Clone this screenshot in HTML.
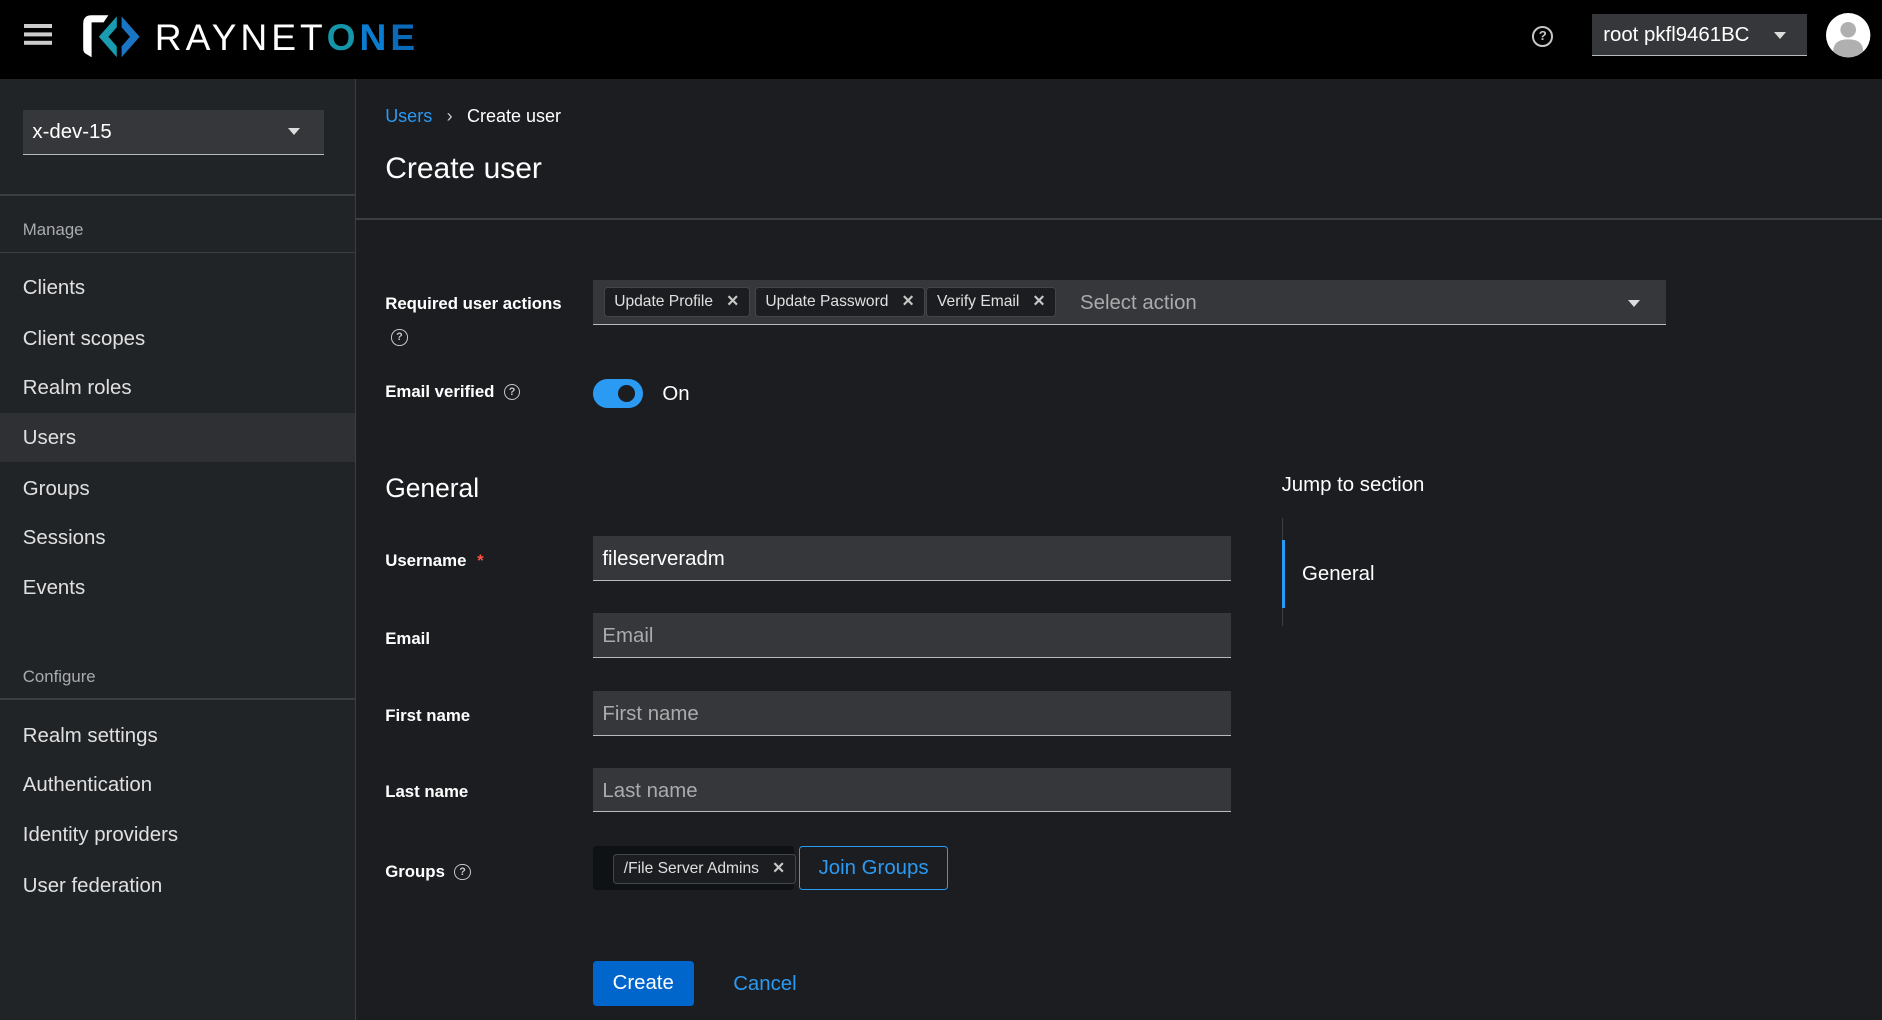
<!DOCTYPE html>
<html><head><meta charset="utf-8"><style>
html,body{margin:0;padding:0;background:#1b1d21;overflow:hidden}
body{zoom:1.2;width:1568px;height:850px;position:relative;font-family:"Liberation Sans",sans-serif;color:#e0e0e0}
.a{position:absolute}
.hdr{left:0;top:0;width:1568px;height:66px;background:#000}
.side{left:0;top:66px;width:296px;height:784px;background:#212427;border-right:1px solid #3c3f42}
.nav{left:19px;font-size:17px;color:#e0e0e0}
.sec{left:19px;font-size:14px;color:#aaabac}
.hr{height:1px;background:#3c3f42}
.lbl{left:321px;font-size:14px;font-weight:bold;color:#fff}
.inp{left:494px;width:532px;height:37px;background:#36373a;border-bottom:1px solid #b8bbbe;box-sizing:border-box;font-size:17px;color:#aaabac;padding:9px 8px;line-height:20px}
.chip{top:239px;height:25px;border:1px solid #444548;border-radius:3px;background:#1b1d21;font-size:13px;color:#e0e0e0;line-height:24px;box-sizing:border-box;padding:0 8px}
.chip b{margin-left:11px;color:#c7c7c7;font-size:13px}
.q{display:inline-block;width:12px;height:12px;border:1.5px solid #c7c7c7;border-radius:50%;font-size:9px;line-height:12px;text-align:center;color:#c7c7c7;font-weight:bold;vertical-align:middle}
</style></head><body>
<div class="a hdr"></div>
<div class="a" style="left:20px;top:20px;width:23px;height:3px;background:#ccc;box-shadow:0 7px 0 #ccc,0 14px 0 #ccc"></div>
<svg class="a" style="left:68px;top:12px" width="52" height="38" viewBox="0 0 52 38">
<path d="M1 8 Q1 1 8 1 L22 1 L18 7 L8 7 L8 36 L3 33 Q1 32 1 29 Z" fill="#fff"/>
<path d="M29 2 L14 19 L29 36 L29 27 L22 19 L29 11 Z" fill="#1a9bb0"/>
<path d="M33 2 L48 19 L33 36 L33 27 L40 19 L33 11 Z" fill="#1a75c4"/>
</svg>
<div class="a" style="left:129px;top:13px;font-size:31px;letter-spacing:3.3px;color:#fff">RAYNET<span style="color:#1595a8;font-weight:bold">O</span><span style="color:#0a7dd0;font-weight:bold">N</span><span style="color:#0a6ab8;font-weight:bold">E</span></div>
<div class="a" style="left:1277px;top:21px"><span class="q" style="width:14px;height:14px;line-height:14px;font-size:11px;border-width:2px">?</span></div>
<div class="a" style="left:1327px;top:12px;width:179px;height:35px;background:#36373a;border-bottom:1px solid #b8bbbe;font-size:17px;color:#fff;line-height:36px;padding-left:9px;box-sizing:border-box">root pkfl9461BC<span style="position:absolute;right:18px;top:15px;border:5px solid transparent;border-top:6px solid #ddd;border-bottom:0"></span></div>
<svg class="a" style="left:1522px;top:11px" width="37" height="37" viewBox="0 0 37 37"><circle cx="18.5" cy="18.5" r="18.5" fill="#fff"/><circle cx="18.5" cy="14" r="6.5" fill="#b0b0b0"/><path d="M6 32 Q6 22 18.5 22 Q31 22 31 32 Q25 37 18.5 37 Q12 37 6 32Z" fill="#b0b0b0"/></svg>

<div class="a side"></div>
<div class="a" style="left:19px;top:92px;width:251px;height:37px;background:#36373a;border-bottom:1px solid #b8bbbe;box-sizing:border-box;font-size:17px;color:#fff;line-height:37px;padding-left:8px">x-dev-15<span style="position:absolute;right:20px;top:15px;border:5px solid transparent;border-top:6px solid #ddd;border-bottom:0"></span></div>
<div class="a hr" style="left:0;top:162px;width:296px"></div>
<div class="a sec" style="top:183px">Manage</div>
<div class="a hr" style="left:0;top:210px;width:296px"></div>
<div class="a" style="left:0;top:344px;width:296px;height:41px;background:#2f3033"></div>
<div class="a nav" style="top:231px">Clients</div>
<div class="a nav" style="top:273px">Client scopes</div>
<div class="a nav" style="top:314px">Realm roles</div>
<div class="a nav" style="top:356px">Users</div>
<div class="a nav" style="top:398px">Groups</div>
<div class="a nav" style="top:439px">Sessions</div>
<div class="a nav" style="top:481px">Events</div>
<div class="a sec" style="top:556px">Configure</div>
<div class="a hr" style="left:0;top:582px;width:296px"></div>
<div class="a nav" style="top:604px">Realm settings</div>
<div class="a nav" style="top:645px">Authentication</div>
<div class="a nav" style="top:687px">Identity providers</div>
<div class="a nav" style="top:729px">User federation</div>

<div class="a" style="left:321px;top:88px;font-size:15px"><span style="color:#2b9af3">Users</span><span style="margin:0 12px;color:#ccc">›</span><span style="color:#fff">Create user</span></div>
<div class="a" style="left:321px;top:127px;font-size:25px;color:#fff">Create user</div>
<div class="a hr" style="left:297px;top:182px;width:1271px"></div>

<div class="a lbl" style="top:245px">Required user actions</div>
<div class="a" style="left:326px;top:272px"><span class="q">?</span></div>
<div class="a" style="left:494px;top:233px;width:894px;height:38px;background:#36373a;border-bottom:1px solid #b8bbbe;box-sizing:border-box"></div>
<div class="a chip" style="left:503px">Update Profile<b>✕</b></div>
<div class="a chip" style="left:629px">Update Password<b>✕</b></div>
<div class="a chip" style="left:772px">Verify Email<b>✕</b></div>
<div class="a" style="left:900px;top:243px;font-size:17px;color:#aaabac">Select action</div>
<div class="a" style="left:1357px;top:250px;border:5px solid transparent;border-top:6px solid #ddd;border-bottom:0"></div>

<div class="a lbl" style="top:318px">Email verified <span class="q" style="margin-left:4px">?</span></div>
<div class="a" style="left:494px;top:316px;width:42px;height:24px;border-radius:12px;background:#2b9af3"></div>
<div class="a" style="left:515px;top:321px;width:14px;height:14px;border-radius:50%;background:#1b1d21"></div>
<div class="a" style="left:552px;top:319px;font-size:17px;color:#fff">On</div>

<div class="a" style="left:321px;top:394px;font-size:22px;color:#fff">General</div>
<div class="a" style="left:1068px;top:395px;font-size:17px;color:#fff">Jump to section</div>
<div class="a" style="left:1068px;top:432px;width:1px;height:90px;background:#3c3f42"></div>
<div class="a" style="left:1068px;top:450px;width:3px;height:57px;background:#2b9af3"></div>
<div class="a" style="left:1085px;top:469px;font-size:17px;color:#fff">General</div>

<div class="a lbl" style="top:459px">Username <span style="color:#fe5142;margin-left:5px">*</span></div>
<div class="a inp" style="top:447px;color:#fff">fileserveradm</div>
<div class="a lbl" style="top:524px">Email</div>
<div class="a inp" style="top:511px">Email</div>
<div class="a lbl" style="top:588px">First name</div>
<div class="a inp" style="top:576px">First name</div>
<div class="a lbl" style="top:652px">Last name</div>
<div class="a inp" style="top:640px">Last name</div>

<div class="a lbl" style="top:718px">Groups <span class="q" style="margin-left:4px">?</span></div>
<div class="a" style="left:494px;top:705px;width:168px;height:37px;background:#0f1214;border-radius:3px"></div>
<div class="a chip" style="left:511px;top:712px;height:25px;line-height:24px;font-size:13px;border-color:#444548;background:#1b1d21">/File Server Admins<b>✕</b></div>
<div class="a" style="left:666px;top:705px;width:124px;height:37px;border:1px solid #2b9af3;border-radius:3px;box-sizing:border-box;color:#2b9af3;font-size:17px;text-align:center;line-height:36px">Join Groups</div>

<div class="a" style="left:494px;top:801px;width:84px;height:37px;background:#0066cc;border-radius:3px;color:#fff;font-size:17px;text-align:center;line-height:38px">Create</div>
<div class="a" style="left:611px;top:811px;font-size:17px;color:#2b9af3">Cancel</div>
</body></html>
